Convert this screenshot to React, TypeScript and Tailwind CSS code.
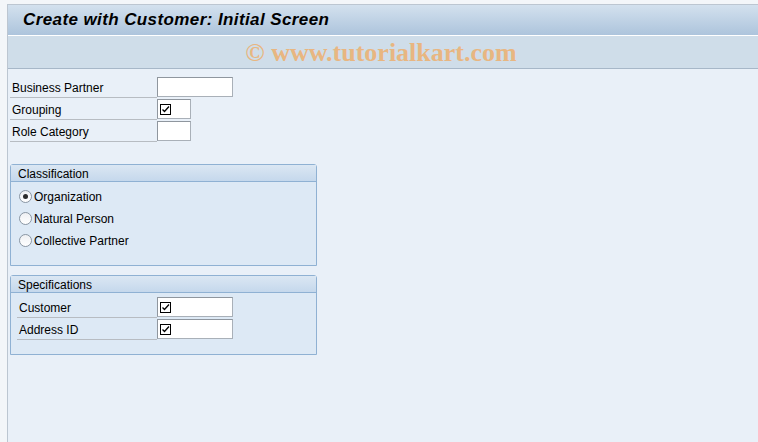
import React from 'react'

const font = { fontFamily: '"Liberation Sans", Arial, sans-serif' }

function CheckGlyph() {
  return (
    <svg width="11" height="11" viewBox="0 0 11 11" className="block">
      <rect x="0.5" y="0.5" width="10" height="10" fill="none" stroke="#000" strokeWidth="1" />
      <path d="M2.5 5.5 L4.5 7.5 L9 2.5" fill="none" stroke="#000" strokeWidth="1.3" />
    </svg>
  )
}

function Field({ width, checked }: { width: string; checked?: boolean }) {
  return (
    <div
      className={`${width} h-[20px] bg-white border border-[#a9b0b8] border-t-[#8f969e] border-l-[#8f969e] flex items-center pl-[2px]`}
    >
      {checked && <CheckGlyph />}
    </div>
  )
}

function Row({
  label,
  labelWidth,
  fieldWidth,
  checked,
}: {
  label: string
  labelWidth: string
  fieldWidth: string
  checked?: boolean
}) {
  return (
    <div className="flex items-center h-[22px]">
      <div className={`${labelWidth} h-[21px] border-b border-[#b7bcc2] pl-[2px] pt-[2px] flex items-center text-[12px] text-black`}>
        {label}
      </div>
      <Field width={fieldWidth} checked={checked} />
    </div>
  )
}

function Radio({ label, selected }: { label: string; selected?: boolean }) {
  return (
    <div className="flex items-center h-[22px] gap-[2px] pt-[1px]">
      <span className="w-[13px] h-[13px] rounded-full border border-[#8a96a3] bg-gradient-to-b from-[#eef0f3] to-white flex items-center justify-center">
        {selected && <span className="w-[5px] h-[5px] rounded-full bg-[#2b2b2b]" />}
      </span>
      <span className="text-[12px] text-black">{label}</span>
    </div>
  )
}

function Group({ title, children, bodyClass }: { title: string; children: React.ReactNode; bodyClass: string }) {
  return (
    <div className="w-[307px] border border-[#8fb1d3] rounded-t-[3px] bg-[#dde9f5]">
      <div className="h-[17px] bg-gradient-to-b from-[#dbe7f3] to-[#c5d8ec] border-b border-[#8fb1d3] pl-[7px] pt-[1px] flex items-center text-[12px] text-black">
        {title}
      </div>
      <div className={bodyClass}>{children}</div>
    </div>
  )
}

export default function App() {
  return (
    <div className="w-[758px] h-[442px] bg-[#f3f6f9] pt-[4px] pl-[7px] overflow-hidden" style={font}>
      <div className="h-full border-l border-t border-[#bcc6d1] bg-[#e9f0f8] flex flex-col">
        <div className="h-[31px] bg-gradient-to-b from-[#d3e1ee] to-[#adc4dc] border-b border-white flex items-center pl-[15px]">
          <span className="text-[17px] font-bold italic text-black tracking-[0.4px]">
            Create with Customer: Initial Screen
          </span>
        </div>
        <div className="h-[33px] bg-[#cfdde9] border-b border-[#a7b7c8] flex items-center justify-center">
          <span
            className="text-[26px] font-bold text-[#e8b681] pr-[4px]"
            style={{ fontFamily: '"Liberation Serif", "Times New Roman", serif' }}
          >
            © www.tutorialkart.com
          </span>
        </div>

        <div className="pl-[2px] pt-[7px] flex flex-col">
          <Row label="Business Partner" labelWidth="w-[147px]" fieldWidth="w-[76px]" />
          <Row label="Grouping" labelWidth="w-[147px]" fieldWidth="w-[34px]" checked />
          <Row label="Role Category" labelWidth="w-[147px]" fieldWidth="w-[34px]" />

          <div className="mt-[22px]">
            <Group title="Classification" bodyClass="pl-[8px] pt-[3px] pb-[14px]">
              <Radio label="Organization" selected />
              <Radio label="Natural Person" />
              <Radio label="Collective Partner" />
            </Group>
          </div>

          <div className="mt-[9px]">
            <Group title="Specifications" bodyClass="pl-[6px] pt-[3px] pb-[14px]">
              <Row label="Customer" labelWidth="w-[140px]" fieldWidth="w-[76px]" checked />
              <Row label="Address ID" labelWidth="w-[140px]" fieldWidth="w-[76px]" checked />
            </Group>
          </div>
        </div>
      </div>
    </div>
  )
}
